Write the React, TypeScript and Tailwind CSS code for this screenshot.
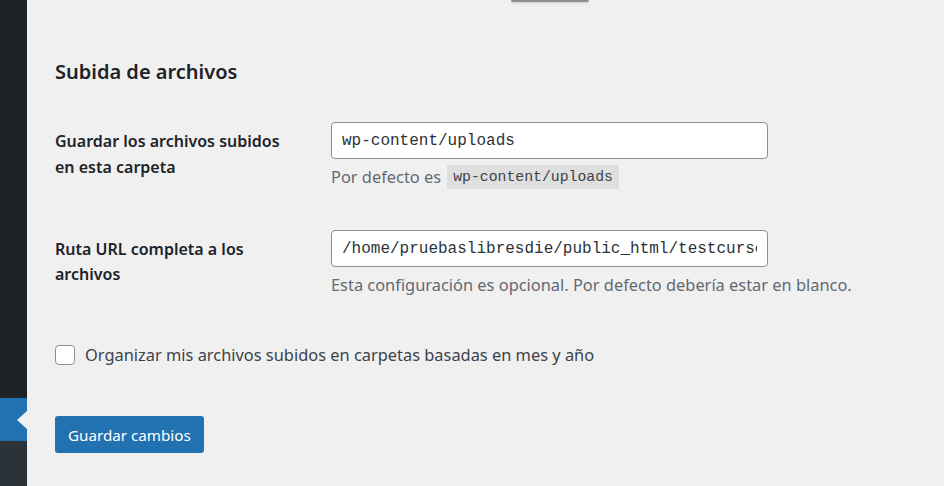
import React from "react";

const sans = "font-['Segoe_UI','Noto_Sans',sans-serif]";
const mono = "font-['Liberation_Mono',monospace]";

const Sidebar: React.FC = () => (
  <div className="w-[27px] shrink-0 flex flex-col">
    <div className="h-[398px] bg-[#1d2327]" />
    <div className="h-[43px] bg-[#2271b1] flex justify-end items-center">
      <div className="w-0 h-0 border-y-[9px] border-y-transparent border-r-[10px] border-r-[#f0f0f1]" />
    </div>
    <div className="flex-1 bg-[#2c3338]" />
  </div>
);

export default function App() {
  return (
    <div className={`flex min-h-[486px] bg-[#f0f0f1] ${sans}`}>
      <Sidebar />
      <main className="flex-1 pl-[28px]">
        {/* bottom edge of the control above, scrolled off */}
        <div className="ml-[456px] w-[78px] h-[2px] bg-[#8c8f94] rounded-b-sm shadow-[0_1px_2px_rgba(0,0,0,0.15)]" />

        <h2 className="mt-[56px] text-[20px] leading-[28px] font-semibold text-[#1d2327]">
          Subida de archivos
        </h2>

        <div className="mt-[36px] grid grid-cols-[276px_1fr]">
          <label className="pt-[6px] text-[16px] leading-[26px] font-semibold text-[#1d2327] pr-[36px]">
            Guardar los archivos subidos en esta carpeta
          </label>
          <div>
            <input
              readOnly
              value="wp-content/uploads"
              className={`${mono} block w-[437px] h-[37px] px-[10px] text-[16px] text-[#2c3338] bg-white border border-[#8c8f94] rounded-[4px] outline-none`}
            />
            <p className="mt-[6px] h-[24px] flex items-center gap-[6px] text-[16.4px] text-[#646970]">
              <span>Por defecto es</span>
              <code
                className={`${mono} h-[24px] flex items-center px-[6px] text-[14.8px] text-[#3c434a] bg-[rgba(0,0,0,0.07)]`}
              >
                wp-content/uploads
              </code>
            </p>
          </div>
        </div>

        <div className="mt-[41px] grid grid-cols-[276px_1fr]">
          <label className="pt-[7px] text-[16px] leading-[25px] font-semibold text-[#1d2327] pr-[36px]">
            Ruta URL completa a los archivos
          </label>
          <div>
            <input
              readOnly
              value="/home/pruebaslibresdie/public_html/testcurso/wp-content/uploads"
              className={`${mono} block w-[437px] h-[37px] px-[10px] text-[16px] text-[#2c3338] bg-white border border-[#8c8f94] rounded-[4px] outline-none`}
            />
            <p className="mt-[6px] h-[24px] flex items-center text-[16.4px] text-[#646970]">
              Esta configuración es opcional. Por defecto debería estar en blanco.
            </p>
          </div>
        </div>

        <label className="mt-[48px] flex items-center gap-[10px] text-[16.4px] leading-[20px] text-[#3c434a]">
          <span className="w-[20px] h-[20px] bg-white border border-[#8c8f94] rounded-[4px] shrink-0" />
          Organizar mis archivos subidos en carpetas basadas en mes y año
        </label>

        <button className="mt-[51px] h-[37px] px-[13px] rounded-[3px] bg-[#2271b1] text-white text-[15.2px] leading-[20px]">
          Guardar cambios
        </button>
      </main>
    </div>
  );
}
